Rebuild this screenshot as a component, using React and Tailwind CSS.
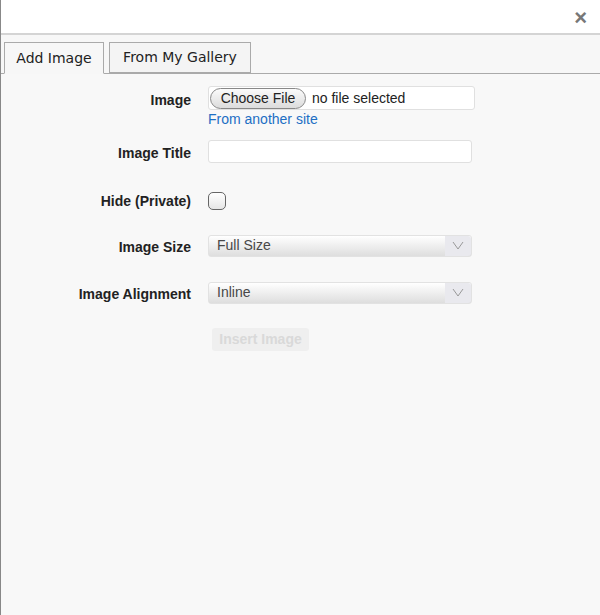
import { useState } from "react";

const Label = ({ children }) => (
  <div className="w-[190px] shrink-0 text-right text-[14px] font-bold text-[#222]">{children}</div>
);

const SelectBox = ({ value }) => (
  <div className="flex h-[22px] w-[264px] items-stretch rounded-[3px] border border-[#e2e2e2] bg-gradient-to-b from-white to-[#dedede]">
    <span className="flex-1 pl-[8px] text-[14px] leading-[19px] text-[#484848]">{value}</span>
    <span className="flex w-[26px] items-center justify-center rounded-r-[3px] bg-[#e9e9ee]">
      <svg width="12" height="9" viewBox="0 0 12 9">
        <path d="M1 1 L6 8 L11 1" fill="none" stroke="#999" strokeWidth="1" />
      </svg>
    </span>
  </div>
);

const App = () => {
  const [tab, setTab] = useState("add");
  const [hidden, setHidden] = useState(false);

  return (
    <div className="flex h-[615px] w-[600px] flex-col border-l border-[#888] bg-[#f8f8f8] font-['Liberation_Sans',Arial,sans-serif]">
      {/* Header */}
      <div className="flex h-[35px] shrink-0 items-end justify-end border-b-2 border-[#d4d4d4] bg-white pr-[13px] pb-[4px]">
        <button className="text-[22px] font-bold leading-none text-[#777]">×</button>
      </div>

      {/* Tabs */}
      <div className="flex h-[39px] shrink-0 items-end gap-[5px] border-b border-[#aaa] bg-[#f7f7f7] pl-[3px] font-['DejaVu_Sans',sans-serif] text-[14px] text-[#222]">
        <button
          onClick={() => setTab("add")}
          className={`-mb-px h-[32px] w-[100px] border border-[#aaa] ${tab === "add" ? "border-b-[#f7f7f7] bg-[#f7f7f7]" : "bg-[#f2f2f2]"}`}
        >
          Add Image
        </button>
        <button
          onClick={() => setTab("gallery")}
          className={`h-[31px] w-[142px] border border-[#aaa] ${tab === "gallery" ? "border-b-[#f7f7f7] bg-[#f7f7f7]" : "bg-[#f4f4f4]"}`}
        >
          From My Gallery
        </button>
      </div>

      {/* Form */}
      <div className="pt-[12px]">
        <div className="flex h-[42px] items-start">
          <div className="pt-[4px]">
            <Label>Image</Label>
          </div>
          <div className="ml-[17px] flex flex-col">
            <div className="flex h-[24px] w-[267px] items-center rounded-[3px] border border-[#e0e0e0] bg-white pl-[1px]">
              <span className="flex h-[21px] w-[96px] items-center justify-center rounded-full border border-[#888] bg-gradient-to-b from-[#fbfbfb] to-[#dcdcdc] text-[14px] text-[#222]">
                Choose File
              </span>
              <span className="ml-[6px] text-[14px] text-[#222]">no file selected</span>
            </div>
            <a className="mt-[1px] text-[14px] leading-[16px] text-[#1d6fc4]">From another site</a>
          </div>
        </div>

        <div className="flex h-[47px] items-center">
          <div className="pt-[3px]">
            <Label>Image Title</Label>
          </div>
          <input className="ml-[17px] h-[23px] w-[264px] rounded-[3px] border border-[#e0e0e0] bg-white px-1 text-[14px] outline-none" />
        </div>

        <div className="flex h-[47px] items-center pt-[5px]">
          <Label>Hide (Private)</Label>
          <button
            onClick={() => setHidden(!hidden)}
            className="ml-[17px] h-[18px] w-[18px] rounded-[5px] border border-[#666] bg-gradient-to-b from-white to-[#e6e6e6]"
          />
        </div>

        <div className="flex h-[47px] items-center">
          <div className="pt-[3px]">
            <Label>Image Size</Label>
          </div>
          <div className="ml-[17px]">
            <SelectBox value="Full Size" />
          </div>
        </div>

        <div className="flex h-[47px] items-center">
          <div className="pt-[3px]">
            <Label>Image Alignment</Label>
          </div>
          <div className="ml-[17px]">
            <SelectBox value="Inline" />
          </div>
        </div>

        <div className="mt-[11px] pl-[211px]">
          <button className="h-[23px] w-[97px] rounded-[3px] bg-[#efefef] text-[14px] font-bold text-[#d9d9d9]">
            Insert Image
          </button>
        </div>
      </div>
    </div>
  );
};

export default App;
